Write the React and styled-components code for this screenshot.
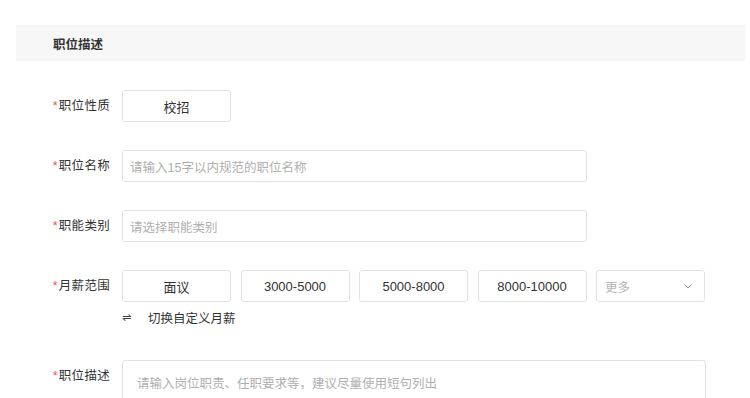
import React from "react";
import styled, { createGlobalStyle } from "styled-components";

const Global = createGlobalStyle`
  html, body { margin: 0; padding: 0; background: #fff; }
  body { font-family: "Liberation Sans", "Noto Sans CJK SC", sans-serif; color: #333; }
  * { box-sizing: border-box; }
`;

const Page = styled.div`
  width: 750px;
  height: 398px;
  overflow: hidden;
  padding: 25px 5px 0 16px;
`;

const SectionHeader = styled.div`
  height: 36px;
  background: #f7f7f7;
  display: flex;
  align-items: center;
  padding-left: 37px;
  font-size: 12.5px;
  font-weight: bold;
  color: #333;
`;

const Form = styled.div`
  display: flex;
  flex-direction: column;
  padding-top: 29px;
  margin-left: -16px;
`;

const Row = styled.div`
  display: grid;
  grid-template-columns: 110px 1fr;
  column-gap: 12px;
  align-items: ${(p) => (p.$top ? "start" : "center")};
  margin-bottom: ${(p) => p.$mb ?? 28}px;
`;

const Label = styled.div`
  text-align: right;
  font-size: 12.5px;
  color: #333;
  line-height: 32px;
  white-space: nowrap;
  letter-spacing: 0.3px;
`;

const Star = styled.span`
  color: #e8545a;
  margin-right: 1px;
`;

const Options = styled.div`
  display: flex;
  gap: 9.5px;
`;

const Option = styled.div`
  width: 109px;
  height: 32px;
  border: 1px solid #e3e3e3;
  border-radius: 3px;
  display: flex;
  align-items: center;
  justify-content: center;
  font-size: 13px;
  color: #333;
`;

const Select = styled.div`
  width: 109px;
  height: 32px;
  border: 1px solid #e3e3e3;
  border-radius: 3px;
  display: flex;
  align-items: center;
  justify-content: space-between;
  padding: 0 12px 0 8px;
  font-size: 12.5px;
  color: #b5b5b5;
`;

const Input = styled.div`
  width: ${(p) => p.$w}px;
  height: ${(p) => p.$h || 32}px;
  border: 1px solid #e3e3e3;
  border-radius: 3px;
  display: flex;
  align-items: ${(p) => (p.$area ? "flex-start" : "center")};
  padding: ${(p) => (p.$area ? "12px 0 0 14px" : "0 0 0 7px")};
  font-size: 12.5px;
  color: #b0b0b0;
`;

const Toggle = styled.div`
  display: flex;
  align-items: center;
  gap: 16px;
  margin-top: 6px;
  font-size: 12.5px;
  color: #333;
  height: 18px;
`;

const SwapIcon = styled.span`
  font-family: "DejaVu Sans", sans-serif;
  font-size: 11px;
  color: #444;
  width: 10px;
`;

const Chevron = () => (
  <svg width="8" height="5" viewBox="0 0 8 5" fill="none">
    <path d="M0.5 0.5 L4 4 L7.5 0.5" stroke="#999" strokeWidth="1" />
  </svg>
);

export default function App() {
  return (
    <>
      <Global />
      <Page>
        <SectionHeader>职位描述</SectionHeader>
        <Form>
          <Row>
            <Label><Star>*</Star>职位性质</Label>
            <Options>
              <Option>校招</Option>
            </Options>
          </Row>
          <Row>
            <Label><Star>*</Star>职位名称</Label>
            <Input $w={465}>请输入15字以内规范的职位名称</Input>
          </Row>
          <Row>
            <Label><Star>*</Star>职能类别</Label>
            <Input $w={465}>请选择职能类别</Input>
          </Row>
          <Row $top $mb={34}>
            <Label><Star>*</Star>月薪范围</Label>
            <div>
              <Options>
                <Option>面议</Option>
                <Option>3000-5000</Option>
                <Option>5000-8000</Option>
                <Option>8000-10000</Option>
                <Select>
                  <span>更多</span>
                  <Chevron />
                </Select>
              </Options>
              <Toggle>
                <SwapIcon>⇌</SwapIcon>
                <span>切换自定义月薪</span>
              </Toggle>
            </div>
          </Row>
          <Row $top>
            <Label><Star>*</Star>职位描述</Label>
            <Input $w={584} $h={80} $area>请输入岗位职责、任职要求等，建议尽量使用短句列出</Input>
          </Row>
        </Form>
      </Page>
    </>
  );
}
